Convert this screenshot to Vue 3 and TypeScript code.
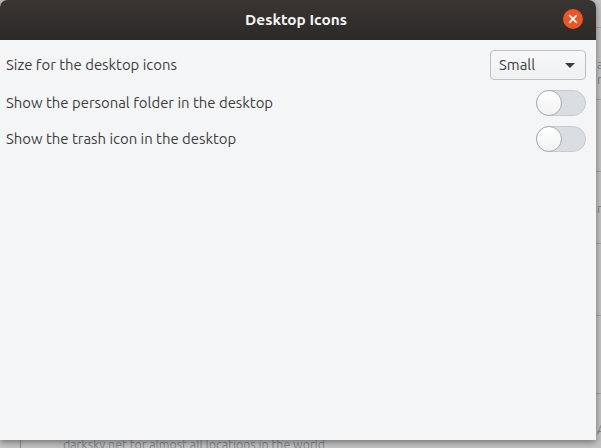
<script setup lang="ts">
const rows = [
  { label: 'Show the personal folder in the desktop' },
  { label: 'Show the trash icon in the desktop' },
]
const lines = [27, 99, 171, 243, 315, 393]
const peeks = [
  { ch: 'a', top: 56 },
  { ch: 'n', top: 71 },
  { ch: 'r', top: 200 },
  { ch: 'A', top: 421 },
]
</script>

<template>
  <div class="desk">
    <div class="behind">
      <i v-for="y in lines" :key="y" class="line" :style="{ top: y + 'px' }"></i>
      <span v-for="p in peeks" :key="p.top" class="peek" :style="{ top: p.top + 'px' }">{{ p.ch }}</span>
      <i class="rule"></i>
      <span class="behind-text">darksky.net for almost all locations in the world</span>
    </div>
    <section class="win">
      <header class="bar">
        <span class="title">Desktop Icons</span>
        <button class="close" aria-label="Close">
          <svg width="10" height="10" viewBox="0 0 10 10"><path d="M1.2 1.2l7.6 7.6M8.8 1.2L1.2 8.8" stroke="#fff" stroke-width="1.7" fill="none" /></svg>
        </button>
      </header>
      <div class="body">
        <div class="row first">
          <span class="label">Size for the desktop icons</span>
          <div class="combo"><span class="label">Small</span><i class="arrow"></i></div>
        </div>
        <div v-for="r in rows" :key="r.label" class="row">
          <span class="label">{{ r.label }}</span>
          <div class="switch"><i class="knob"></i></div>
        </div>
      </div>
    </section>
  </div>
</template>

<style>
html, body { margin: 0; background: #c4c4c4; overflow: hidden; }
</style>

<style scoped>
.desk {
  position: relative;
  width: 601px;
  height: 448px;
  overflow: hidden;
  background: #c4c4c4;
  font-family: Ubuntu, "Open Sans", "Noto Sans", sans-serif;
}
.behind {
  position: absolute;
  inset: 0;
  color: #858a8e;
  font-size: 12.4px;
}
.line {
  position: absolute;
  left: 590px;
  right: 0;
  height: 1px;
  background: #a8a8a8;
}
.peek {
  position: absolute;
  left: 597px;
  line-height: 17px;
  font-size: 13px;
}
.rule {
  position: absolute;
  left: 20px;
  top: 420px;
  width: 1px;
  height: 28px;
  background: #8f8f8f;
}
.behind-text {
  position: absolute;
  left: 63px;
  top: 437px;
  white-space: nowrap;
}
.win {
  position: absolute;
  left: 0;
  top: 0;
  width: 596px;
  height: 440px;
  display: flex;
  flex-direction: column;
  background: #f4f5f7;
  border-radius: 7px 7px 0 0;
  box-shadow: 0 2px 7px rgba(0, 0, 0, 0.45);
  overflow: hidden;
}
.bar {
  height: 40px;
  flex: none;
  display: flex;
  align-items: center;
  justify-content: center;
  position: relative;
  box-sizing: border-box;
  padding: 0 4px 2px 0;
  background: linear-gradient(#383533, #2c2a28);
}
.title { color: #f4f4f4; font-weight: 700; font-size: 15.4px; }
.close {
  position: absolute;
  right: 13px;
  top: 9px;
  width: 20px;
  height: 20px;
  padding: 0;
  border: 0;
  border-radius: 50%;
  background: #ee5522;
  display: flex;
  align-items: center;
  justify-content: center;
}
.body { padding: 10px 10px 0 6px; color: #3d3d3d; font-size: 14.9px; }
.label { padding-bottom: 2px; }
.row {
  height: 36px;
  display: flex;
  align-items: center;
  justify-content: space-between;
}
.first { height: 30px; margin-bottom: 5px; }
.combo {
  width: 96px;
  height: 30px;
  box-sizing: border-box;
  display: flex;
  align-items: center;
  justify-content: space-between;
  padding: 0 10px 0 8px;
  border: 1px solid #bcc0c4;
  border-radius: 4px;
  background: linear-gradient(#f8f8f9, #eef0f2);
}
.arrow {
  width: 0;
  height: 0;
  border-left: 5px solid transparent;
  border-right: 5px solid transparent;
  border-top: 5px solid #3d3d3d;
}
.switch {
  width: 50px;
  height: 26px;
  box-sizing: border-box;
  border: 1px solid #c8ccd0;
  border-radius: 13px;
  background: #d9dce0;
  position: relative;
}
.knob {
  position: absolute;
  left: -1px;
  top: -1px;
  width: 26px;
  height: 26px;
  box-sizing: border-box;
  border: 1px solid #a9adb3;
  border-radius: 50%;
  background: linear-gradient(#ffffff, #f1f2f3);
}
</style>
